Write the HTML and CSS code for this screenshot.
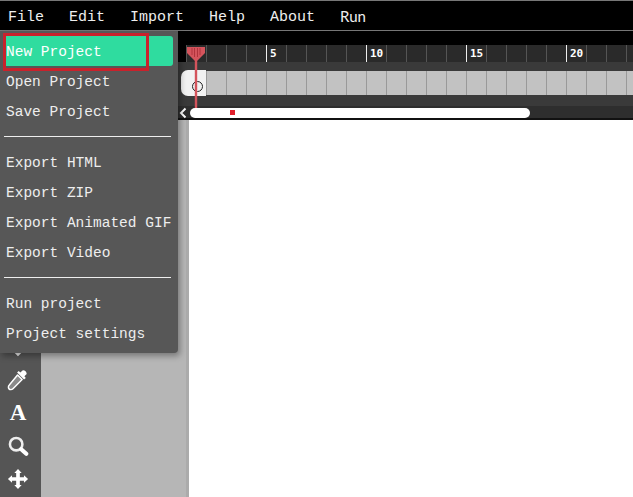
FILE: index.html
```html
<!DOCTYPE html>
<html lang="en">
<head>
<meta charset="utf-8">
<title>Project editor</title>
<link rel="stylesheet" href="styles.css">
</head>
<body>
<div class="app">
  <nav class="menubar">
    <span>File</span><span>Edit</span><span>Import</span><span>Help</span><span>About</span><span class="run">Run</span>
  </nav>
  <div class="workspace">
    <aside class="toolbar">
      <svg class="tool" viewBox="0 0 24 24"><path d="M12 4 20 12 12 20 4 12Z" fill="none" stroke="#eee" stroke-width="3"/></svg>
      <svg class="tool" viewBox="0 0 24 24"><path d="M17 1.500C19 1 21.500 3 21.500 5.500L19 8 20.500 9.800 18.600 11.500 11 3.800 12.800 2.200 14.500 3.800Z" fill="#fff"/><path d="M11.500 6.500 16.500 11.500 6.500 21.500C5 23 3 22.500 2.200 21.700 1.500 21 1 19 2.500 17.500Z" fill="#8a8a8a" stroke="#fff" stroke-width="1.600" stroke-linejoin="round"/></svg>
      <div class="tool tool-letter">A</div>
      <svg class="tool" viewBox="0 0 24 24"><circle cx="10" cy="10" r="6.800" fill="none" stroke="#eee" stroke-width="2.800"/><path d="M15.500 15.500 21 20.500" stroke="#fff" stroke-width="4.500" stroke-linecap="round"/></svg>
      <svg class="tool" viewBox="0 0 24 24"><path d="M12 1 16 5.500H14V10H18.500V8L23 12 18.500 16V14H14V18.500H16L12 23 8 18.500H10V14H5.500V16L1 12 5.500 8V10H10V5.500H8Z" fill="#fff"/></svg>
    </aside>
    <main class="editor">
      <section class="timeline">
        <div class="ruler">
          <div class="cell"></div><div class="cell"></div><div class="cell"></div><div class="cell"></div>
          <div class="cell mark">5</div><div class="cell"></div><div class="cell"></div><div class="cell"></div><div class="cell"></div>
          <div class="cell mark">10</div><div class="cell"></div><div class="cell"></div><div class="cell"></div><div class="cell"></div>
          <div class="cell mark">15</div><div class="cell"></div><div class="cell"></div><div class="cell"></div><div class="cell"></div>
          <div class="cell mark">20</div><div class="cell"></div><div class="cell"></div><div class="cell"></div>
        </div>
        <div class="track">
          <div class="frame-first"><span class="keyframe"></span></div>
          <div class="frames"></div>
        </div>
        <div class="scroller">
          <svg class="scroll-arrow" viewBox="0 0 8 12"><path d="M6.500 1.500 2 6 6.500 10.500" fill="none" stroke="#fff" stroke-width="2"/></svg>
          <div class="thumb"><span class="thumb-dot"></span></div>
        </div>
        <svg class="playhead" viewBox="0 0 18 62"><path d="M0 1H18V7L11 14 10.200 15V62H7.800V15L7 14 0 7Z" fill="#d4545c"/><path d="M5 2V9M7.500 2V11M10.500 2V11M13 2V9" stroke="#b0333c" stroke-width="1"/></svg>
      </section>
      <div class="stage">
        <div class="gutter"></div>
        <div class="canvas"></div>
      </div>
    </main>
  </div>
  <div class="menu">
    <div class="item active">New Project</div>
    <div class="item">Open Project</div>
    <div class="item">Save Project</div>
    <hr class="divider">
    <div class="item">Export HTML</div>
    <div class="item">Export ZIP</div>
    <div class="item">Export Animated GIF</div>
    <div class="item">Export Video</div>
    <hr class="divider">
    <div class="item">Run project</div>
    <div class="item">Project settings</div>
    <div class="highlight"></div>
  </div>
</div>
</body>
</html>
```
FILE: styles.css
```css
* { box-sizing: border-box; }
html, body { margin: 0; height: 100%; overflow: hidden; }
body { font-family: "Liberation Mono", monospace; background: #fff; }
.app { position: relative; width: 633px; height: 497px; display: flex; flex-direction: column; overflow: hidden; }

.menubar {
  height: 31px; flex: none; display: flex; align-items: center; gap: 25px; padding: 3px 0 0 8px;
  background: #000; color: #eee; font-size: 15px;
  border-top: 1px solid #777; border-bottom: 1px solid #777;
}
.menubar .run { font-family: "Lato", sans-serif; font-size: 15px; position: relative; top: -1px; }

.workspace { flex: 1; display: flex; min-height: 0; }
.toolbar {
  width: 41px; flex: none; background: #555; display: flex; flex-direction: column; align-items: center;
  justify-content: flex-end; gap: 9px; padding: 0 5px 6px 0;
}
.tool { width: 22px; height: 24px; display: block; }
.tool-letter { font: bold 23px/24px "Liberation Serif", serif; color: #fff; text-align: center; }

.editor { flex: 1; min-width: 0; display: flex; flex-direction: column; }
.timeline { position: relative; height: 89px; flex: none; background: #3a3a3a; overflow: hidden; }
.ruler {
  height: 31px; display: flex; padding: 14px 0 0 145px; background: #000;
}
.cell { width: 20px; flex: none; height: 17px; background: #2a2a2a; border-left: 1px solid #555; color: #fff; font: bold 11px/18px "DejaVu Sans Mono", monospace; padding-left: 3px; }
.cell.mark { border-left-color: #eee; }
.track { height: 26px; margin-top: 8px; display: flex; padding-left: 140px; }
.frame-first { width: 25px; height: 26px; flex: none; background: #f2f2f2; border-radius: 7px 0 0 7px; position: relative; }
.keyframe { position: absolute; left: 11px; top: 11px; width: 11px; height: 11px; border: 1.500px solid #222; border-radius: 50%; }
.frames {
  flex: 1; height: 24px; margin-top: 1px; background-color: #c2c2c2;
  background-image: repeating-linear-gradient(90deg, #999 0 1px, transparent 1px 20px);
}
.scroller { position: relative; height: 14px; margin-top: 10px; padding: 2px 0 0 149px; background: #2e2e2e; border-bottom: 2px solid #111; }
.scroll-arrow { position: absolute; left: 138px; top: 1px; width: 8px; height: 12px; }
.thumb { position: relative; width: 340px; height: 10px; background: #fff; border-radius: 5px; }
.thumb-dot { position: absolute; left: 40px; top: 2px; width: 5px; height: 5px; background: #e0202c; }
.playhead { position: absolute; left: 146px; top: 15px; width: 18px; height: 62px; }

.stage { flex: 1; display: flex; min-height: 0; }
.gutter { width: 148px; flex: none; background: linear-gradient(90deg, #b6b6b6 0 145px, #ababab 145px); }
.canvas { flex: 1; background: #fff; }

.menu {
  position: absolute; left: 0; top: 31px; width: 178px; height: 322px; padding: 5px 5px 0 3px;
  background: #575757; color: #eee; font-size: 14.500px; border-radius: 0 0 4px 0;
  box-shadow: 2px 3px 6px rgba(0,0,0,.35);
}
.item { height: 30px; line-height: 32px; padding-left: 3px; white-space: nowrap; }
.item.active { background: #2fdc9f; border-radius: 3px; color: #fff; }
.divider { height: 1px; margin: 10px 2px 10px 1px; border: 0; background: #eee; }
.highlight { position: absolute; left: 3px; top: 2px; width: 146px; height: 38px; border: 3px solid #c9222c; }
```
